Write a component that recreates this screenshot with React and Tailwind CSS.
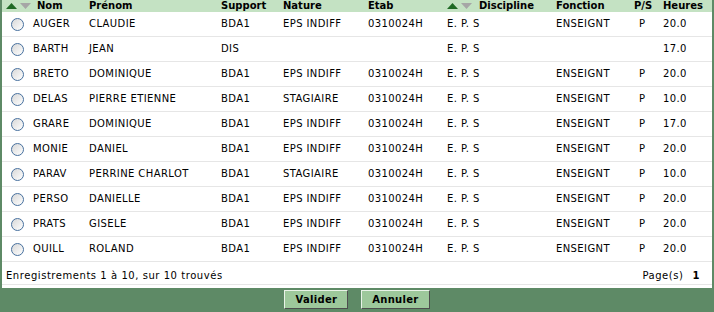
import React from "react";

const rows = [
    ["AUGER", "CLAUDIE", "BDA1", "EPS INDIFF", "0310024H", "E. P. S", "ENSEIGNT", "P", "20.0"],
    ["BARTH", "JEAN", "DIS", "", "", "E. P. S", "", "", "17.0"],
    ["BRETO", "DOMINIQUE", "BDA1", "EPS INDIFF", "0310024H", "E. P. S", "ENSEIGNT", "P", "20.0"],
    ["DELAS", "PIERRE ETIENNE", "BDA1", "STAGIAIRE", "0310024H", "E. P. S", "ENSEIGNT", "P", "10.0"],
    ["GRARE", "DOMINIQUE", "BDA1", "EPS INDIFF", "0310024H", "E. P. S", "ENSEIGNT", "P", "17.0"],
    ["MONIE", "DANIEL", "BDA1", "EPS INDIFF", "0310024H", "E. P. S", "ENSEIGNT", "P", "20.0"],
    ["PARAV", "PERRINE CHARLOT", "BDA1", "STAGIAIRE", "0310024H", "E. P. S", "ENSEIGNT", "P", "10.0"],
    ["PERSO", "DANIELLE", "BDA1", "EPS INDIFF", "0310024H", "E. P. S", "ENSEIGNT", "P", "20.0"],
    ["PRATS", "GISELE", "BDA1", "EPS INDIFF", "0310024H", "E. P. S", "ENSEIGNT", "P", "20.0"],
    ["QUILL", "ROLAND", "BDA1", "EPS INDIFF", "0310024H", "E. P. S", "ENSEIGNT", "P", "20.0"],
];

// column widths, in order after the radio cell
const cols = ["w-[56px]", "w-[132px]", "w-[62px]", "w-[85px]", "w-[79px]", "w-[109px]", "w-[78px]", "w-[29px]", "w-[49px]"];

const SortArrows = () => (
    <div className="flex items-center gap-[3px]">
        <svg width="11" height="6" viewBox="0 0 11 6">
            <polygon points="5.5,0 11,6 0,6" fill="#1f6a24" />
        </svg>
        <svg width="11" height="6" viewBox="0 0 11 6">
            <polygon points="0,0 11,0 5.5,6" fill="#a6a6a6" />
        </svg>
    </div>
);

const Radio = () => (
    <div className="w-[13px] h-[13px] rounded-full border border-[#47709e] bg-gradient-to-br from-[#d8d8d8] to-[#ffffff]" />
);

const Button = ({ children }) => (
    <button className="h-[19px] px-[10px] bg-[#9dc89b] border border-t-[#e9f3e8] border-l-[#e9f3e8] border-r-[#4e4e4e] border-b-[#4e4e4e] font-bold text-[10px] text-black leading-none tracking-[0.3px]">
        {children}
    </button>
);

export default function App() {
    return (
        <div className="w-[714px] h-[312px] bg-[#5e8a66] text-[10px] text-black" style={{ fontFamily: '"DejaVu Sans", Verdana, sans-serif' }}>
            <div className="mx-[2px] bg-white">
                {/* Header */}
                <div className="flex h-[12px] items-center bg-[#c4e2c3] font-bold leading-none">
                    <div className="w-[31px] pl-[4px]">
                        <SortArrows />
                    </div>
                    <div className={`${cols[0]} pl-[4px]`}>Nom</div>
                    <div className={cols[1]}>Prénom</div>
                    <div className={cols[2]}>Support</div>
                    <div className={cols[3]}>Nature</div>
                    <div className={cols[4]}>Etab</div>
                    <div className={`${cols[5]} flex items-center gap-[7px]`}>
                        <SortArrows />
                        <span>Discipline</span>
                    </div>
                    <div className={cols[6]}>Fonction</div>
                    <div className={cols[7]}>P/S</div>
                    <div className={cols[8]}>Heures</div>
                </div>

                {/* Rows */}
                {rows.map((r, i) => (
                    <div key={i} className="flex h-[25px] items-center border-b border-[#e6e6e6] leading-none tracking-[0.4px]">
                        <div className="w-[31px] flex justify-center pr-[6px] pl-[5px]">
                            <Radio />
                        </div>
                        {r.map((c, j) => (
                            <div key={j} className={`${cols[j]} ${j === 7 ? "pl-[5px]" : ""} whitespace-nowrap`}>
                                {c}
                            </div>
                        ))}
                    </div>
                ))}

                {/* Footer */}
                <div className="h-[26px] pb-[3px]">
                    <div className="flex h-[23px] items-center justify-between pt-[5px] pl-[4px] pr-[12px] border-b border-[#e6e6e6] leading-none tracking-[0.55px]">
                        <span>Enregistrements 1 à 10, sur 10 trouvés</span>
                        <span>
                            Page(s)<b className="ml-[9px]">1</b>
                        </span>
                    </div>
                </div>
            </div>

            {/* Actions */}
            <div className="flex justify-center gap-[13px] pt-[2px]">
                <Button>Valider</Button>
                <Button>Annuler</Button>
            </div>
        </div>
    );
}
